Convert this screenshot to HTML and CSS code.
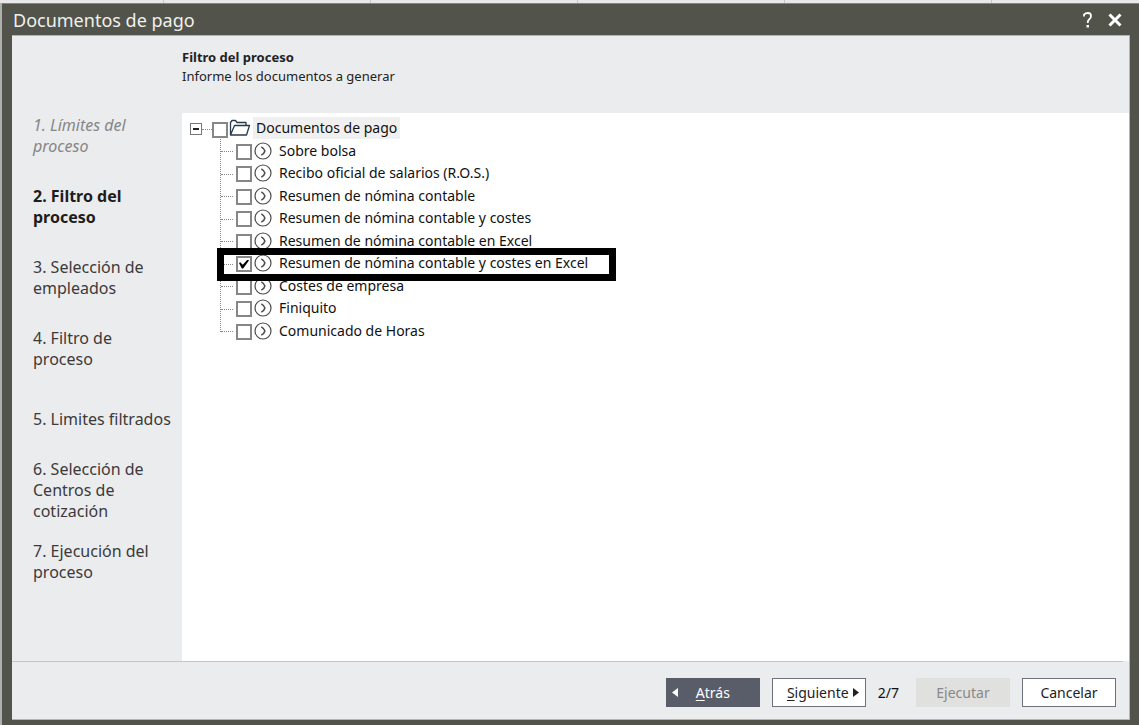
FILE: index.html
```html
<!DOCTYPE html>
<html lang="es">
<head>
<meta charset="utf-8">
<title>Documentos de pago</title>
<link rel="stylesheet" href="styles.css">
</head>
<body>
<svg class="defs" aria-hidden="true">
  <symbol id="item" viewBox="0 0 18 18"><circle cx="9" cy="9" r="8" fill="#fff" stroke="#4c4c4c" stroke-width="1.2"/><path d="M7.3 4.8 Q10.3 6.4 10.9 9 Q10.3 11.6 7.3 13.2" fill="none" stroke="#4c4c4c" stroke-width="1.5"/></symbol>
</svg>
<div class="backdrop">
  <div class="window">
    <header class="titlebar">
      <h1 class="title">Documentos de pago</h1>
      <button class="tool" type="button" aria-label="Ayuda"><svg width="12" height="16" viewBox="0 0 12 16"><path d="M2 4.500 V2.600 Q3.400 1 6 1 Q9 1 9 4 Q9 6 7.300 7.200 Q5.700 8.300 5.700 11" fill="none" stroke="#fff" stroke-width="1.800"/><path d="M4.500 13h2.500v2.500H4.500z" fill="#fff"/></svg></button>
      <button class="tool" type="button" aria-label="Cerrar"><svg width="14" height="14" viewBox="0 0 14 14"><path d="M1.500 1.500 L12.500 12.500 M12.500 1.500 L1.500 12.500" stroke="#fff" stroke-width="3"/></svg></button>
    </header>
    <div class="dialog">
      <div class="content">
        <ol class="steps">
          <li class="step done">1. Límites del proceso</li>
          <li class="step current">2. Filtro del proceso</li>
          <li class="step">3. Selección de empleados</li>
          <li class="step">4. Filtro de proceso</li>
          <li class="step">5. Limites filtrados</li>
          <li class="step">6. Selección de Centros de cotización</li>
          <li class="step">7. Ejecución del proceso</li>
        </ol>
        <main class="main">
          <div class="intro">
            <h2 class="heading">Filtro del proceso</h2>
            <p class="hint">Informe los documentos a generar</p>
          </div>
          <div class="tree">
            <div class="root">
              <button class="expander" type="button" aria-label="Contraer"></button>
              <span class="link"></span>
              <input class="check" type="checkbox" id="root">
              <svg class="folder" width="22" height="18" viewBox="0 0 22 18"><path d="M1.5 16 V3.5 L3 1.5 H6.5 L8 3.5 H17 V6 M1.5 16 L5.5 6.5 H20.5 L17.5 16 Z" fill="#fff" stroke="#26394d" stroke-width="1.3" stroke-linejoin="round"/></svg>
              <label class="name selected" for="root">Documentos de pago</label>
            </div>
            <ul class="items">
              <li class="item"><input class="check" type="checkbox" id="d1"><svg class="icon"><use href="#item"/></svg><label class="name" for="d1">Sobre bolsa</label></li>
              <li class="item"><input class="check" type="checkbox" id="d2"><svg class="icon"><use href="#item"/></svg><label class="name" for="d2">Recibo oficial de salarios (R.O.S.)</label></li>
              <li class="item"><input class="check" type="checkbox" id="d3"><svg class="icon"><use href="#item"/></svg><label class="name" for="d3">Resumen de nómina contable</label></li>
              <li class="item"><input class="check" type="checkbox" id="d4"><svg class="icon"><use href="#item"/></svg><label class="name" for="d4">Resumen de nómina contable y costes</label></li>
              <li class="item"><input class="check" type="checkbox" id="d5"><svg class="icon"><use href="#item"/></svg><label class="name" for="d5">Resumen de nómina contable en Excel</label></li>
              <li class="item marked"><input class="check" type="checkbox" id="d6" checked><svg class="icon"><use href="#item"/></svg><label class="name" for="d6">Resumen de nómina contable y costes en Excel</label></li>
              <li class="item"><input class="check" type="checkbox" id="d7"><svg class="icon"><use href="#item"/></svg><label class="name" for="d7">Costes de empresa</label></li>
              <li class="item"><input class="check" type="checkbox" id="d8"><svg class="icon"><use href="#item"/></svg><label class="name" for="d8">Finiquito</label></li>
              <li class="item"><input class="check" type="checkbox" id="d9"><svg class="icon"><use href="#item"/></svg><label class="name" for="d9">Comunicado de Horas</label></li>
            </ul>
          </div>
        </main>
      </div>
      <footer class="footer">
        <button class="btn back" type="button"><svg class="arrow" viewBox="0 0 6 9"><path d="M6 0v9L0 4.500z" fill="#fff"/></svg><span class="caption"><u>A</u>trás</span></button>
        <button class="btn next" type="button"><span><u>S</u>iguiente</span><svg class="arrow" viewBox="0 0 6 9"><path d="M0 0v9l6-4.500z" fill="#222"/></svg></button>
        <span class="page">2/7</span>
        <button class="btn run" type="button" disabled>Ejecutar</button>
        <button class="btn" type="button">Cancelar</button>
      </footer>
    </div>
  </div>
</div>
</body>
</html>
```
FILE: styles.css
```css
*, *::before, *::after { box-sizing: border-box; }
body { margin: 0; font: 14px/18px "Noto Sans", "Open Sans", sans-serif; color: #111; }
h1, h2, p, ul, ol { margin: 0; padding: 0; font-weight: 400; list-style: none; }
.defs { position: absolute; width: 0; height: 0; }
.backdrop {
  display: flex;
  min-height: 100vh;
  padding: 3px 0 0 2px;
  background: linear-gradient(90deg, #e8e8e8 206px, #c8c8c8 206px) -43px 0 / 207px 3px repeat-x, #aeb0ae;
}
.window {
  flex: 1;
  display: flex;
  flex-direction: column;
  padding: 0 9px 5px 10px;
  background: #52534a;
  border-top: 1px solid #85867f;
}
.titlebar { display: flex; align-items: center; gap: 14px; height: 31px; padding: 0 8px 0 1px; }
.title { flex: 1; font-size: 18px; line-height: 24px; color: #f0f0ee; }
.tool { display: flex; padding: 0; border: 0; background: none; }
.dialog {
  flex: 1;
  display: flex;
  flex-direction: column;
  background: #ebecee;
  border: 1px solid #b4b5b2;
  border-width: 1px 1px 1px 0;
}
.content { flex: 1; display: flex; }
.steps { width: 170px; padding: 64px 9px 0 21px; }
.step {
  display: flex;
  align-items: center;
  height: 71px;
  font-size: 16px;
  line-height: 21px;
  color: #3c3a3a;
}
.done { font-style: italic; color: #868686; }
.current { font-weight: 700; color: #1e1c1c; }
.main { flex: 1; display: flex; flex-direction: column; }
.intro { height: 77px; padding-top: 12px; }
.heading { font-size: 13px; line-height: 19px; font-weight: 700; color: #222; }
.hint { font-size: 13px; line-height: 19px; color: #222; }
.tree { flex: 1; padding: 3px 8px; background: #fff; }
.root, .item { display: flex; align-items: center; height: 23px; }
.expander {
  width: 12px;
  height: 12px;
  margin-top: 3px;
  padding: 0;
  border: 1px solid #777;
  background: linear-gradient(#222, #222) center / 6px 2px no-repeat #fff;
}
.link { width: 10px; margin-top: 3px; border-top: 1px dotted #888; }
.check {
  appearance: none;
  display: grid;
  place-items: center;
  width: 16px;
  height: 16px;
  margin: 2px 0 0;
  background: #fff;
  border: 2px solid #868686;
}
.root .check { margin-top: 4px; }
.check:checked::before {
  content: "";
  width: 10px;
  height: 9px;
  background: #000;
  clip-path: polygon(0 40%, 12% 30%, 38% 58%, 86% 0, 100% 12%, 42% 100%, 28% 100%);
}
.folder { margin-left: 1px; }
.name { white-space: nowrap; line-height: 22px; }
.selected { margin-left: 2px; padding: 0 3px; background: #f0f0f0; }
.items { margin-left: 30px; border-left: 1px dotted #888; height: 193px; }
.item { position: relative; }
.item:nth-child(even) { height: 22px; }
.item::before { content: ""; width: 12px; margin: 2px 3px 0 0; border-top: 1px dotted #888; }
.icon { width: 18px; height: 18px; margin: 0 7px 0 2px; }
.marked::after {
  content: "";
  position: absolute;
  z-index: 1;
  left: -4px;
  top: -4px;
  width: 399px;
  height: 33px;
  border: 7px solid #000;
  pointer-events: none;
}
.footer {
  display: flex;
  justify-content: flex-end;
  align-items: flex-start;
  height: 58px;
  margin-right: 6px;
  padding: 16px 7px 0 0;
  gap: 12px;
  border-top: 1px solid #c4c6c4;
}
.btn {
  display: flex;
  align-items: center;
  justify-content: center;
  width: 94px;
  height: 29px;
  padding: 0;
  border: 1px solid #6d717d;
  background: #fff;
  font: inherit;
  color: #222;
}
.btn u { text-underline-offset: 2px; }
.arrow { width: 6px; height: 9px; }
.back { justify-content: flex-start; gap: 18px; padding-left: 5px; background: #595d69; border-color: #595d69; color: #fff; }
.next { gap: 4px; padding-left: 8px; }
.page { line-height: 29px; }
.run { margin-left: 5px; border-color: #e0e1de; background: #e0e1de; color: #888; }
```
